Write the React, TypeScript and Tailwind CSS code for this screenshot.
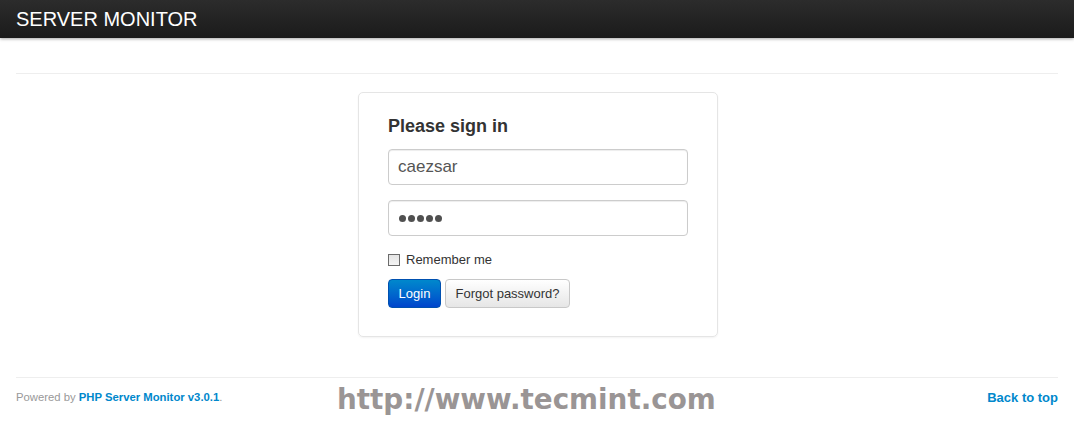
import React from "react";

export default function App() {
  return (
    <div className="w-[1074px] h-[424px] bg-white overflow-hidden" style={{ fontFamily: '"Liberation Sans", Arial, sans-serif' }}>
      <div className="h-[38px] bg-gradient-to-b from-[#2c2c2c] to-[#1b1b1b] shadow-[0_1px_3px_rgba(0,0,0,0.35)] flex items-center px-4">
        <span className="text-white text-[20px] leading-none">SERVER MONITOR</span>
      </div>
      <div className="px-4">
        <div className="h-[35px]" />
        <div className="border-t border-[#eeeeee]" />
        <div className="flex justify-center pt-[18px] pl-[2px]">
          <div className="w-[360px] h-[245px] border border-[#e5e5e5] rounded-[5px] shadow-[0_1px_2px_rgba(0,0,0,0.05)] px-[29px] pt-[21px]">
            <h2 className="text-[18px] font-bold text-[#333] leading-[24px]">Please sign in</h2>
            <div className="mt-[11px] h-[36px] w-[300px] border border-[#cccccc] rounded-[4px] shadow-[inset_0_1px_1px_rgba(0,0,0,0.075)] flex items-center px-[9px] text-[17px] text-[#555]">caezsar</div>
            <div className="mt-[15px] h-[36px] w-[300px] border border-[#cccccc] rounded-[4px] shadow-[inset_0_1px_1px_rgba(0,0,0,0.075)] flex items-center px-[10px] gap-[2px]">
              {[0, 1, 2, 3, 4].map((i) => (
                <span key={i} className="w-[7px] h-[7px] rounded-full bg-[#505050]" />
              ))}
            </div>
            <label className="mt-[14px] flex items-center gap-[6px] text-[13px] text-[#333] leading-[20px]">
              <span className="w-[12px] h-[12px] border border-[#6b6b6b] bg-gradient-to-b from-[#e4e4e4] to-[#f4f4f4]" />
              Remember me
            </label>
            <div className="mt-[9px] flex gap-[4px]">
              <button className="h-[29px] w-[53px] rounded-[4px] text-[13px] text-white bg-gradient-to-b from-[#0088cc] to-[#0044cc] border border-[#0050b0]">Login</button>
              <button className="h-[29px] w-[125px] rounded-[4px] text-[13px] text-[#333] bg-gradient-to-b from-[#ffffff] to-[#e6e6e6] border border-[#c8c8c8] shadow-[inset_0_1px_0_rgba(255,255,255,0.2)]">Forgot password?</button>
            </div>
          </div>
        </div>
        <div className="h-[40px]" />
        <div className="border-t border-[#eeeeee]" />
        <div className="flex items-center justify-between h-[39px] relative">
          <span className="text-[11.3px] text-[#999]">
            Powered by <span className="font-bold text-[#0088cc]">PHP Server Monitor v3.0.1</span>.
          </span>
          <span
            className="absolute left-[321px] top-[4px] text-[27.8px] font-bold text-[#9a9595] leading-[36px]"
            style={{ fontFamily: '"DejaVu Sans", Verdana, sans-serif' }}
          >
            http://www.tecmint.com
          </span>
          <span className="text-[13px] font-bold text-[#0088cc]">Back to top</span>
        </div>
      </div>
    </div>
  );
}
